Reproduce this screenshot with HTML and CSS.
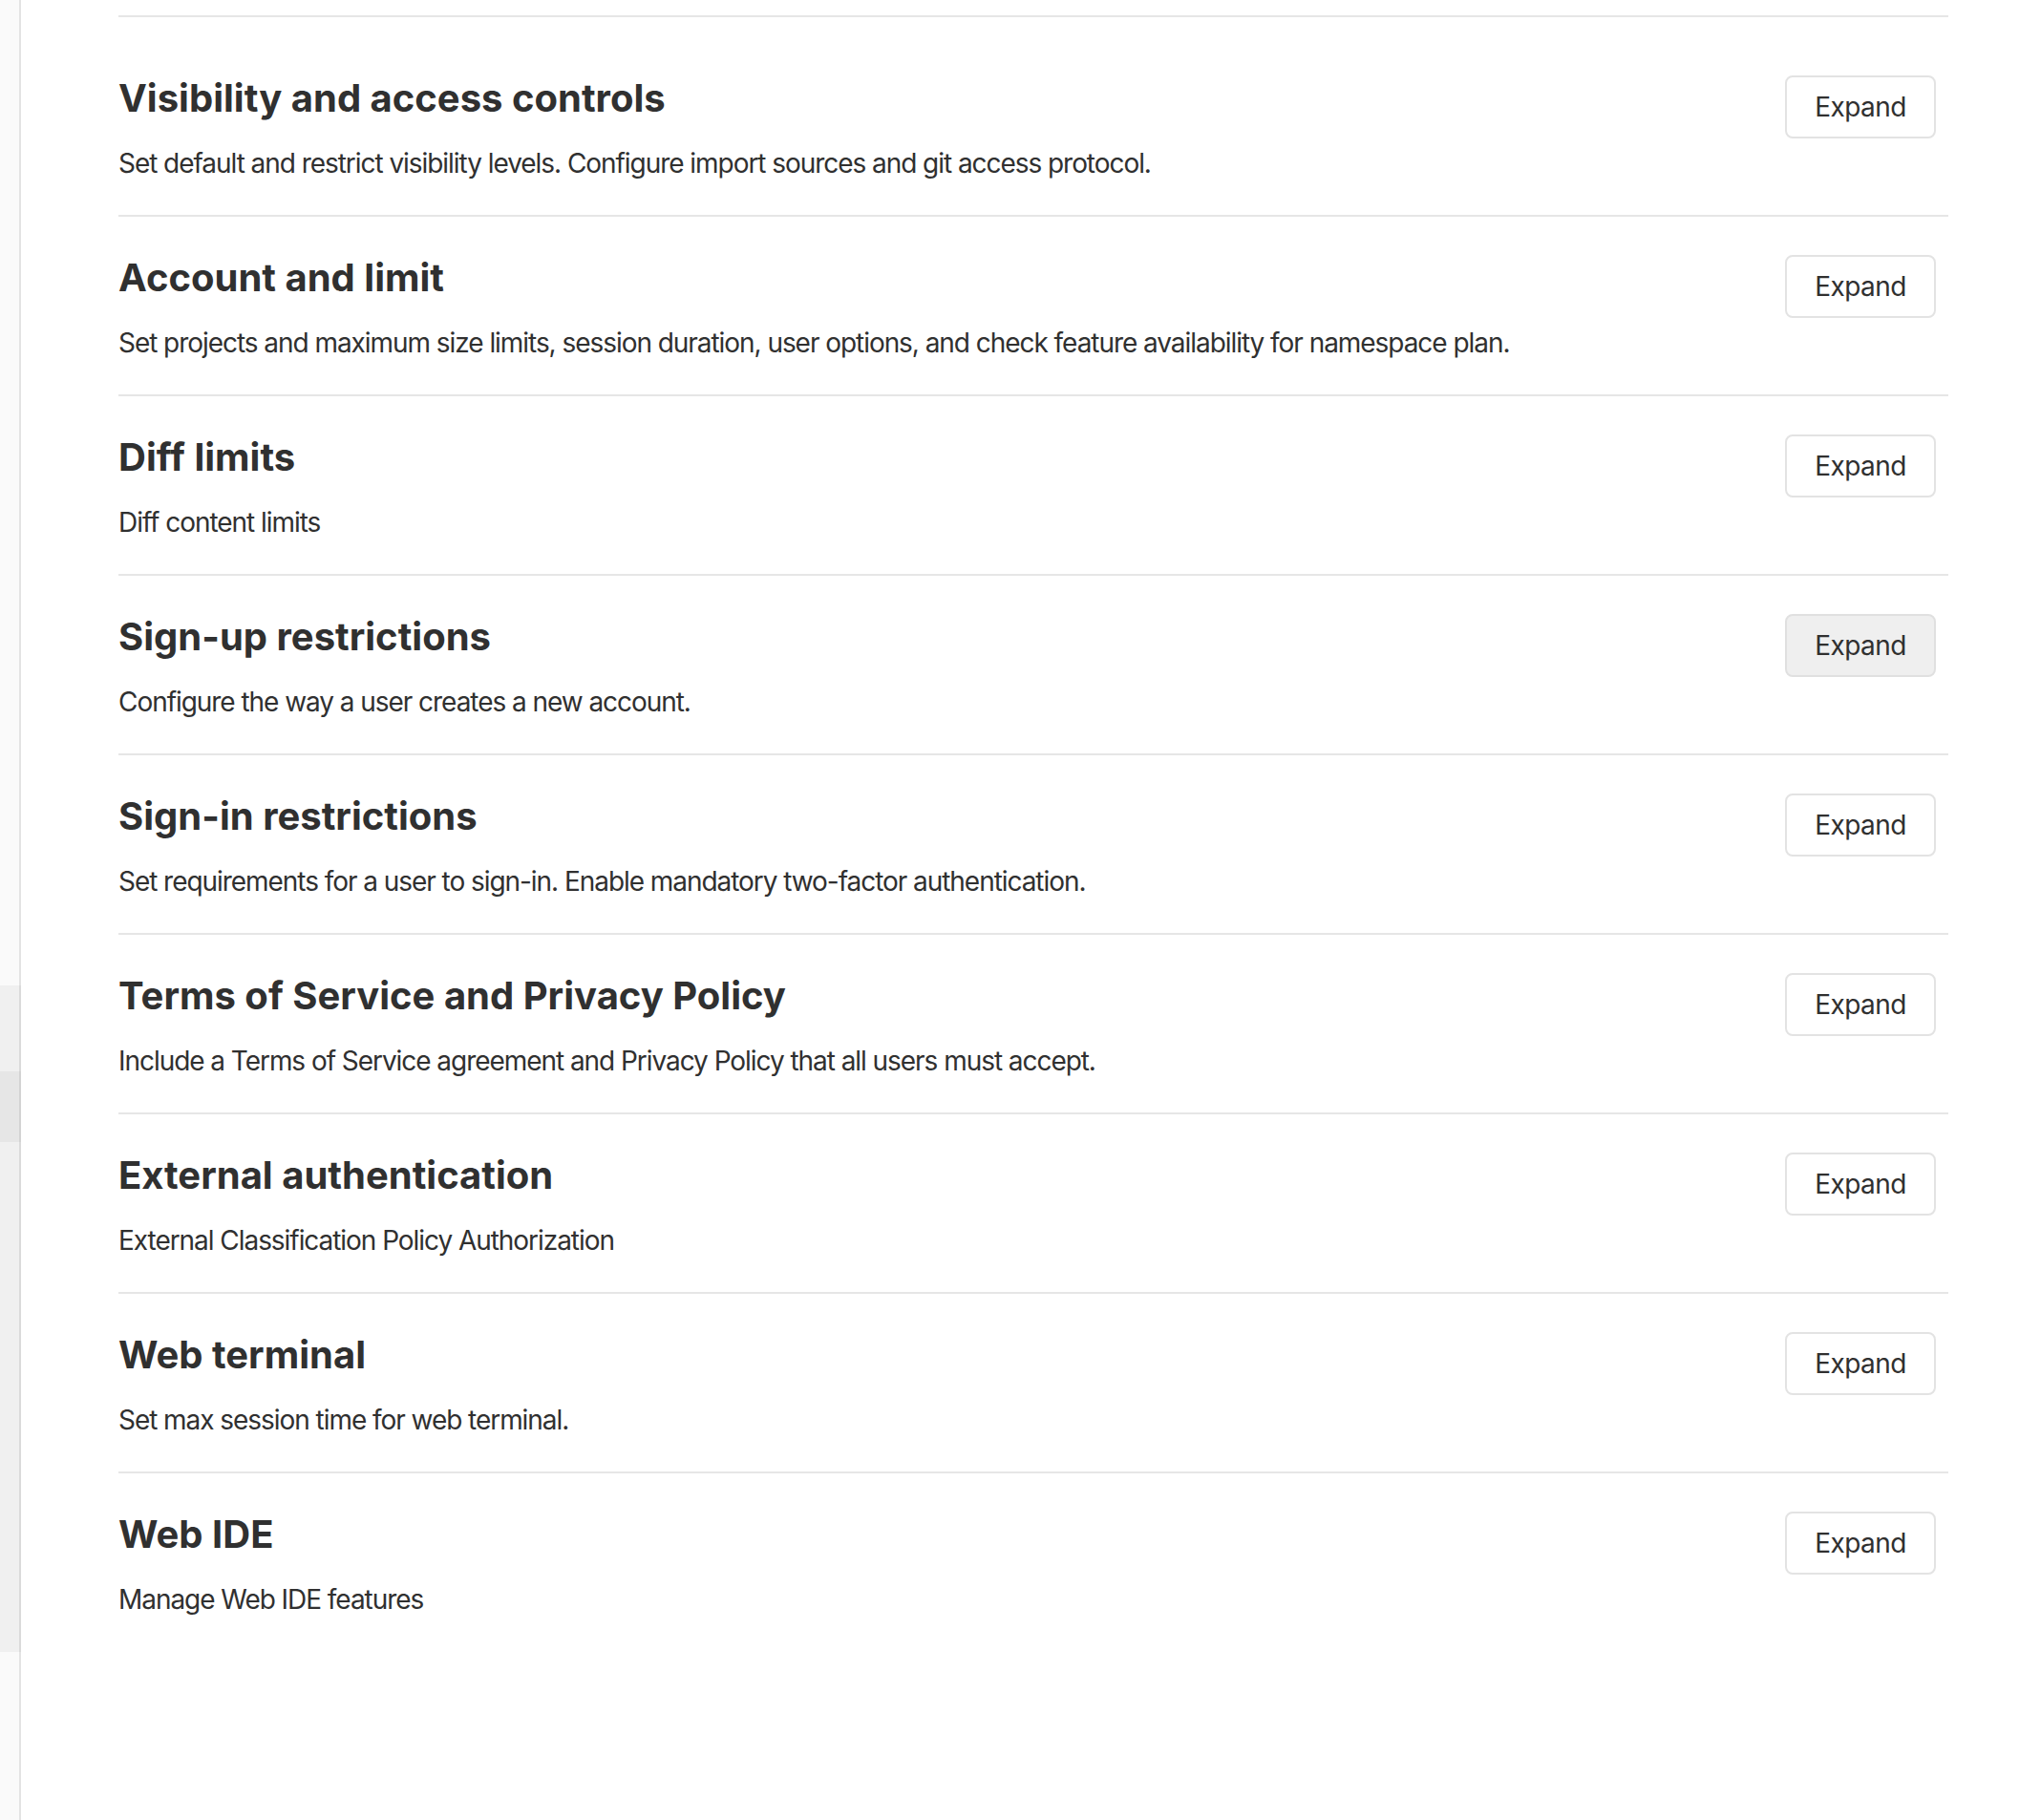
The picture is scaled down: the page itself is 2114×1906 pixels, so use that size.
FILE: index.html
```html
<!DOCTYPE html>
<html lang="en">
<head>
<meta charset="utf-8">
<title>Settings</title>
<link rel="stylesheet" href="styles.css">
</head>
<body>
<div class="page">
  <aside class="sidebar">
    <div class="nav-block nav-top"></div>
    <div class="nav-block nav-group"></div>
    <div class="nav-block nav-active"></div>
    <div class="nav-block nav-sub"></div>
    <div class="nav-block nav-bottom"></div>
  </aside>
  <main class="content">
    <section class="settings first">
      <div class="settings-text">
        <h4 class="settings-title">Visibility and access controls</h4>
        <p class="settings-desc">Set default and restrict visibility levels. Configure import sources and git access protocol.</p>
      </div>
      <button class="btn">Expand</button>
    </section>
    <section class="settings">
      <div class="settings-text">
        <h4 class="settings-title">Account and limit</h4>
        <p class="settings-desc">Set projects and maximum size limits, session duration, user options, and check feature availability for namespace plan.</p>
      </div>
      <button class="btn">Expand</button>
    </section>
    <section class="settings">
      <div class="settings-text">
        <h4 class="settings-title">Diff limits</h4>
        <p class="settings-desc">Diff content limits</p>
      </div>
      <button class="btn">Expand</button>
    </section>
    <section class="settings">
      <div class="settings-text">
        <h4 class="settings-title">Sign-up restrictions</h4>
        <p class="settings-desc">Configure the way a user creates a new account.</p>
      </div>
      <button class="btn btn-hover">Expand</button>
    </section>
    <section class="settings">
      <div class="settings-text">
        <h4 class="settings-title">Sign-in restrictions</h4>
        <p class="settings-desc">Set requirements for a user to sign-in. Enable mandatory two-factor authentication.</p>
      </div>
      <button class="btn">Expand</button>
    </section>
    <section class="settings">
      <div class="settings-text">
        <h4 class="settings-title">Terms of Service and Privacy Policy</h4>
        <p class="settings-desc">Include a Terms of Service agreement and Privacy Policy that all users must accept.</p>
      </div>
      <button class="btn">Expand</button>
    </section>
    <section class="settings">
      <div class="settings-text">
        <h4 class="settings-title">External authentication</h4>
        <p class="settings-desc">External Classification Policy Authorization</p>
      </div>
      <button class="btn">Expand</button>
    </section>
    <section class="settings">
      <div class="settings-text">
        <h4 class="settings-title">Web terminal</h4>
        <p class="settings-desc">Set max session time for web terminal.</p>
      </div>
      <button class="btn">Expand</button>
    </section>
    <section class="settings">
      <div class="settings-text">
        <h4 class="settings-title">Web IDE</h4>
        <p class="settings-desc">Manage Web IDE features</p>
      </div>
      <button class="btn">Expand</button>
    </section>
  </main>
</div>
</body>
</html>
```
FILE: styles.css
```css
* { box-sizing: border-box; }

html, body {
  margin: 0;
  padding: 0;
  background: #ffffff;
}

body {
  font-family: Inter, "Noto Sans", "Liberation Sans", sans-serif;
  color: #303030;
}

.page {
  display: flex;
  min-height: 1906px;
}

.sidebar {
  width: 22px;
  flex: 0 0 22px;
  display: flex;
  flex-direction: column;
}

.nav-block {
  border-right: 2px solid #e3e3e3;
  background: #fafafa;
}

.nav-top { height: 1032px; }
.nav-group { height: 90px; background: #f0f0f0; border-right-color: #dadada; }
.nav-active { height: 74px; background: #e6e6e6; border-right-color: #d3d3d3; }
.nav-sub { height: 534px; background: #f0f0f0; border-right-color: #dadada; }
.nav-bottom { flex: 1; }

.content {
  flex: 1;
  padding: 16px 74px 0 102px;
}

.settings {
  display: flex;
  justify-content: space-between;
  align-items: flex-start;
  border-top: 2px solid #e6e6e6;
  padding: 40px 0 36px;
  height: 188px;
}

.settings.first {
  padding-top: 61px;
  height: 209px;
}

.settings-text {
  flex: 1;
  min-width: 0;
}

.settings-title {
  margin: 0;
  font-size: 40px;
  line-height: 48px;
  font-weight: 700;
  letter-spacing: 0;
  color: #303030;
}

.settings-desc {
  margin: 24px 0 0;
  font-size: 28px;
  line-height: 40px;
  font-weight: 400;
  letter-spacing: -1.05px;
  color: #303030;
}

.btn {
  flex: 0 0 auto;
  width: 158px;
  height: 66px;
  margin-right: 13px;
  border: 2px solid #e3e3e3;
  border-radius: 8px;
  background: #ffffff;
  font-family: inherit;
  font-size: 28px;
  letter-spacing: -0.6px;
  color: #303030;
  padding: 0;
  cursor: pointer;
}

.btn-hover {
  background: #efefef;
  border-color: #e0e0e0;
}
```
